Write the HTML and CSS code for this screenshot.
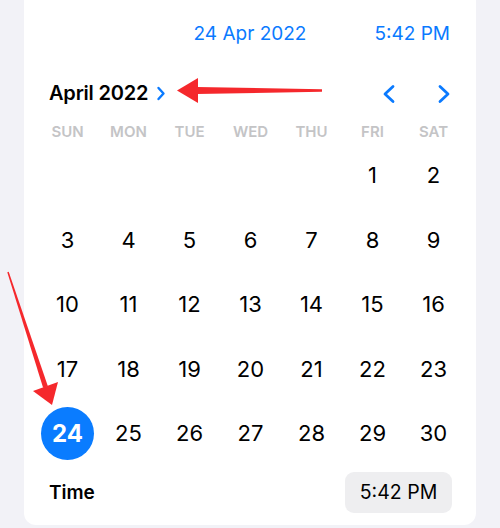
FILE: index.html
```html
<!DOCTYPE html>
<html>
<head>
<meta charset="utf-8">
<link rel="stylesheet" href="styles.css">
</head>
<body>
<div class="card">
  <div class="top">
    <span class="top-date">24 Apr 2022</span>
    <span class="top-time">5:42 PM</span>
  </div>
  <div class="month-row">
    <div class="month">
      <span class="month-label">April 2022</span>
      <svg class="chev-small" width="10" height="15" viewBox="0 0 10 15"><path d="M2.5 2 L7.5 7.5 L2.5 13" fill="none" stroke="#0a7aff" stroke-width="2.4" stroke-linecap="round" stroke-linejoin="round"/></svg>
    </div>
    <div class="nav">
      <svg width="16" height="20" viewBox="0 0 16 20"><path d="M12 2.5 L4 10 L12 17.5" fill="none" stroke="#0a7aff" stroke-width="2.8" stroke-linecap="round" stroke-linejoin="round"/></svg>
      <svg width="16" height="20" viewBox="0 0 16 20"><path d="M4 2.5 L12 10 L4 17.5" fill="none" stroke="#0a7aff" stroke-width="2.8" stroke-linecap="round" stroke-linejoin="round"/></svg>
    </div>
  </div>
  <div class="weekdays">
    <span>SUN</span><span>MON</span><span>TUE</span><span>WED</span><span>THU</span><span>FRI</span><span>SAT</span>
  </div>
  <div class="days">
    <span></span><span></span><span></span><span></span><span></span><span>1</span><span>2</span>
    <span>3</span><span>4</span><span>5</span><span>6</span><span>7</span><span>8</span><span>9</span>
    <span>10</span><span>11</span><span>12</span><span>13</span><span>14</span><span>15</span><span>16</span>
    <span>17</span><span>18</span><span>19</span><span>20</span><span>21</span><span>22</span><span>23</span>
    <span><b class="selected">24</b></span><span>25</span><span>26</span><span>27</span><span>28</span><span>29</span><span>30</span>
  </div>
  <div class="time-row">
    <span class="time-label">Time</span>
    <span class="time-pill">5:42 PM</span>
  </div>
</div>
<svg class="arrows" width="500" height="528" viewBox="0 0 500 528">
  <polygon points="322,89.3 322,91.7 197,94 197,87" fill="#f5282c"/>
  <polygon points="177,90.5 198,78 198,103" fill="#f5282c"/>
  <polygon points="7.3,272.2 8.7,271.8 47.9,386.2 43.1,387.8" fill="#f5282c"/>
  <polygon points="52,405 33,391 58,382" fill="#f5282c"/>
</svg>
</body>
</html>
```

FILE: styles.css
```css
html, body {
  margin: 0;
  padding: 0;
}
body {
  background: #f2f2f7;
  width: 500px;
  height: 528px;
  overflow: hidden;
  position: relative;
  font-family: Inter, "Noto Sans", "Liberation Sans", sans-serif;
  -webkit-font-smoothing: antialiased;
}
.card {
  margin-left: 24px;
  width: 452px;
  height: 525px;
  background: #ffffff;
  border-radius: 0 0 12px 12px;
  box-sizing: border-box;
  display: flex;
  flex-direction: column;
}
.top {
  height: 66px;
  display: flex;
  justify-content: flex-end;
  align-items: center;
  padding-right: 26px;
  gap: 68px;
  color: #0a7aff;
  font-size: 19px;
}
.month-row {
  height: 54px;
  display: flex;
  align-items: center;
  justify-content: space-between;
  padding: 0 24px 0 25px;
}
.month {
  display: flex;
  align-items: center;
  gap: 8px;
}
.month-label {
  font-size: 20px;
  font-weight: 600;
  color: #000;
  letter-spacing: -0.2px;
}
.chev-small {
  display: block;
  margin-top: 1px;
}
.nav {
  display: flex;
  gap: 39px;
  margin-top: 2px;
}
.nav svg {
  display: block;
}
.weekdays {
  height: 23px;
  margin-left: 13px;
  display: grid;
  grid-template-columns: repeat(7, 61px);
  align-items: center;
  justify-items: center;
  font-size: 15px;
  font-weight: 600;
  color: #c4c4c6;
}
.days {
  margin-left: 13px;
  display: grid;
  grid-template-columns: repeat(7, 61px);
  grid-auto-rows: 64.5px;
  align-items: center;
  justify-items: center;
  font-size: 22px;
  color: #000;
}
.days span {
  display: flex;
  align-items: center;
  justify-content: center;
}
.selected {
  width: 53px;
  height: 53px;
  border-radius: 50%;
  background: #0a7cff;
  color: #fff;
  font-weight: 700;
  font-size: 24px;
  display: flex;
  align-items: center;
  justify-content: center;
}
.time-row {
  margin-top: 6px;
  display: flex;
  align-items: center;
  justify-content: space-between;
  padding: 0 24px 0 25px;
}
.time-label {
  font-size: 19px;
  font-weight: 600;
  color: #000;
}
.time-pill {
  width: 107px;
  height: 41px;
  border-radius: 9px;
  background: #eeeef0;
  display: flex;
  align-items: center;
  justify-content: center;
  font-size: 19.5px;
  color: #000;
}
.arrows {
  position: absolute;
  left: 0;
  top: 0;
  pointer-events: none;
}
```
